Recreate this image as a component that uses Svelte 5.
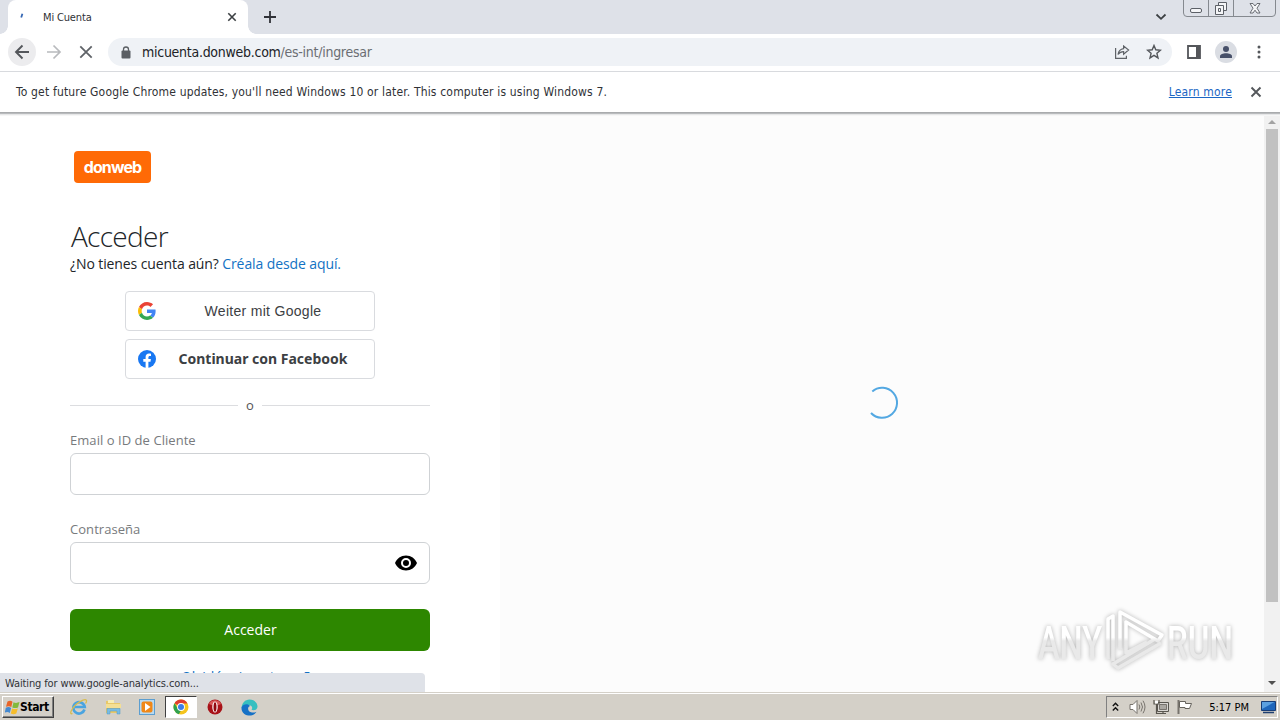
<script>
	let email = '';
	let password = '';
	const tab = 'Mi Cuenta';
	const host = 'micuenta.donweb.com';
	const path = '/es-int/ingresar';
</script>

<div class="desktop">
	<div class="browser">
		<div class="tabstrip">
			<div class="tab">
				<svg class="loading" width="16" height="16" viewBox="0 0 16 16">
					<path d="M5.2 8.500 6.400 4.700" stroke="#3567b4" stroke-width="1.800" />
				</svg>
				<span class="tab-title">{tab}</span>
				<svg class="tab-close" width="10" height="10" viewBox="0 0 10 10">
					<path d="m1.3 1.3 7.4 7.4m0-7.4-7.4 7.4" stroke="#3c4043" stroke-width="1.6" />
				</svg>
			</div>
			<svg class="new-tab" width="12" height="12" viewBox="0 0 12 12">
				<path d="M6 0v12M0 6h12" stroke="#303238" stroke-width="1.8" />
			</svg>
			<svg class="tab-search" width="12" height="8" viewBox="0 0 12 8">
				<path d="m1.5 1.5 4.5 4.3 4.5-4.3" fill="none" stroke="#3c4043" stroke-width="1.8" />
			</svg>
			<svg class="window-buttons" width="94" height="18" viewBox="0 0 94 18">
				<path
					d="M.5 0v13q0 3.500 3.500 3.500h85q3.500 0 3.500-3.500V0M25.500 0v16M50.500 0v16"
					fill="none"
					stroke="#85898f"
				/>
				<g fill="#f4f5f7" stroke="#5c6067">
					<rect x="7.500" y="8.500" width="11" height="4" rx="1.500" />
					<path d="M35.500 2.500h8v8h-8z" />
					<path d="M32.500 5.500h8v9h-8z" />
					<path d="M35.500 8.500h2v3h-2z" />
					<path
						d="M67 3.500h3l2 2.500 2-2.500h3l-3 4.700 3 4.800h-3l-2-2.800-2 2.800h-3l3-4.800z"
						stroke-width=".9"
					/>
				</g>
			</svg>
		</div>

		<div class="toolbar">
			<div class="round back">
				<svg width="16" height="16" viewBox="0 0 16 16">
					<path
						d="M15 8H2m6.500-6.500L2 8l6.500 6.500"
						fill="none"
						stroke="#54575b"
						stroke-width="1.900"
					/>
				</svg>
			</div>
			<svg class="forward" width="16" height="16" viewBox="0 0 16 16">
				<path
					d="M1 8h13M7.500 1.500 14 8l-6.500 6.500"
					fill="none"
					stroke="#b8babd"
					stroke-width="1.700"
				/>
			</svg>
			<svg class="stop" width="14" height="14" viewBox="0 0 14 14">
				<path d="m1.300 1.300 11.400 11.400m0-11.400L1.300 12.700" stroke="#5f6368" stroke-width="1.800" />
			</svg>
			<div class="omnibox">
				<svg width="10" height="13" viewBox="0 0 10 13">
					<rect x=".5" y="4.500" width="9" height="8" rx="1" fill="#5b5f64" />
					<path d="M2.500 5V3.500a2.500 2.500 0 0 1 5 0V5" fill="none" stroke="#5b5f64" stroke-width="1.300" />
				</svg>
				<span class="url">{host}<i>{path}</i></span>
				<svg class="share" width="16" height="14" viewBox="0 0 16 14">
					<g fill="none" stroke="#5f6368" stroke-width="1.200">
						<path d="M1.600 3v10.400h10.800v-2.600" />
						<path d="M9.600 1v2.600C6.400 4 4.600 6 4 9.500c1.500-2 3.300-2.800 5.600-2.800v2.600L14.600 5z" />
					</g>
				</svg>
				<svg class="star" width="16" height="16" viewBox="0 0 16 16">
					<path
						d="m8 1.500 1.800 4.300 4.700.4-3.600 3.100 1.100 4.600-4-2.500-4 2.500 1.100-4.600-3.600-3.100 4.700-.4z"
						fill="none"
						stroke="#54575b"
						stroke-width="1.400"
					/>
				</svg>
			</div>
			<svg class="panel" width="14" height="14" viewBox="0 0 14 14">
				<path d="M1 1h12v12H1z" fill="none" stroke="#54565a" stroke-width="1.800" />
				<path d="M9 1h4v12H9z" fill="#54565a" />
			</svg>
			<div class="round avatar">
				<svg width="14" height="14" viewBox="0 0 14 14" fill="#475069">
					<circle cx="7" cy="4" r="3" />
					<path d="M1 13v-1.800C1 9.200 4 8.200 7 8.200s6 1 6 3V13z" />
				</svg>
			</div>
			<svg class="dots" width="4" height="14" viewBox="0 0 4 14" fill="#54575b">
				<circle cx="2" cy="2" r="1.500" />
				<circle cx="2" cy="7" r="1.500" />
				<circle cx="2" cy="12" r="1.500" />
			</svg>
		</div>

		<div class="infobar">
			<span class="notice">
				To get future Google Chrome updates, you'll need Windows 10 or later. This computer is using
				Windows 7.
			</span>
			<span class="learn">Learn more</span>
			<svg width="12" height="12" viewBox="0 0 12 12">
				<path d="m1.500 1.500 9 9m0-9-9 9" stroke="#54575b" stroke-width="1.900" />
			</svg>
		</div>

		<div class="page">
			<main>
				<div class="logo"><span>donweb</span></div>
				<h1><span>Acceder</span></h1>
				<p class="signup"><span class="ask">¿No tienes cuenta aún?</span> <span class="create">Créala desde aquí.</span></p>

				<button class="social">
					<svg width="18" height="18" viewBox="0 0 48 48">
						<path
							fill="#ea4335"
							d="M24 9.500c3.540 0 6.710 1.220 9.210 3.600l6.850-6.850C35.900 2.380 30.470 0 24 0 14.620 0 6.510 5.380 2.560 13.220l7.980 6.190C12.430 13.720 17.740 9.500 24 9.500z"
						/>
						<path
							fill="#4285f4"
							d="M46.980 24.550c0-1.570-.15-3.090-.38-4.550H24v9.020h12.940c-.58 2.960-2.260 5.480-4.780 7.180l7.730 6c4.510-4.180 7.090-10.360 7.090-17.650z"
						/>
						<path
							fill="#fbbc05"
							d="M10.530 28.590A14.500 14.500 0 0 1 9.770 24c0-1.600.27-3.140.76-4.590l-7.980-6.190A23.900 23.900 0 0 0 0 24c0 3.880.92 7.540 2.560 10.780z"
						/>
						<path
							fill="#34a853"
							d="M24 48c6.480 0 11.930-2.130 15.890-5.810l-7.730-6c-2.150 1.450-4.920 2.300-8.160 2.300-6.260 0-11.570-4.220-13.470-9.910l-7.980 6.190C6.510 42.620 14.620 48 24 48z"
						/>
					</svg>
					<span class="google">Weiter mit Google</span>
				</button>
				<button class="social">
					<svg width="18" height="18" viewBox="0 0 18 18">
						<circle cx="9" cy="9" r="9" fill="#1877f2" />
						<path
							fill="#fff"
							d="M7.600 18v-6.300H5.300V9h2.300V7c0-2.300 1.300-3.500 3.400-3.500.9 0 2 .2 2 .2v2.200h-1.100c-1.100 0-1.500.7-1.500 1.400V9h2.500l-.4 2.700h-2.100V18z"
						/>
					</svg>
					<span class="facebook">Continuar con Facebook</span>
				</button>

				<div class="divider"><span>o</span></div>

				<label>
					<span class="l-email">Email o ID de Cliente</span>
					<input type="text" bind:value={email} />
				</label>
				<label>
					<span class="l-pass">Contraseña</span>
					<div class="password">
						<input type="password" bind:value={password} />
						<svg class="eye" width="22" height="16" viewBox="0 0 22 16">
							<path
								fill-rule="evenodd"
								d="M11 .5C6 .5 1.800 3.600 0 8c1.800 4.400 6 7.500 11 7.500S20.200 12.400 22 8C20.200 3.600 16 .5 11 .5zM11 13a5 5 0 1 1 0-10 5 5 0 0 1 0 10zm0-2a3 3 0 1 0 0-6 3 3 0 0 0 0 6z"
							/>
						</svg>
					</div>
				</label>
				<button class="submit"><span>Acceder</span></button>
				<div class="forgot"><span>Olvidé mi contraseña</span></div>
			</main>

			<div class="aside">
				<svg class="spinner" width="34" height="34" viewBox="0 0 34 34">
					<path
						d="M7.300 5.400A15 15 0 1 1 6 27"
						fill="none"
						stroke="#53a8e2"
						stroke-width="2"
					/>
				</svg>
			</div>

			<div class="scrollbar">
				<svg width="8" height="4" viewBox="0 0 8 4"><path d="m0 4 4-4 4 4z" fill="#a3a3a3" /></svg>
				<div class="thumb"></div>
				<svg width="8" height="4" viewBox="0 0 8 4"><path d="m0 0 4 4 4-4z" fill="#505050" /></svg>
			</div>

			<svg class="watermark" width="220" height="80" viewBox="0 0 220 80">
				<defs>
					<linearGradient id="fade" x1="0" y1="12" x2="0" y2="64" gradientUnits="userSpaceOnUse">
						<stop offset=".45" stop-color="#fff" />
						<stop offset=".52" stop-color="#e9e9e9" />
					</linearGradient>
				</defs>
				<g class="mark">
					<text x="6" y="57" textLength="64" lengthAdjust="spacingAndGlyphs">ANY</text>
					<text x="135" y="57" textLength="66" lengthAdjust="spacingAndGlyphs">RUN</text>
					<g fill="none" stroke="url(#fade)" stroke-width="3.500" stroke-linejoin="round">
						<path d="M76 57V17l5-3v45" />
						<path d="m88 47V10l42 23-4 6-32-19v31l21-11" />
						<path d="m129 41-43 25-5-4 42-25" />
					</g>
				</g>
			</svg>
			<div class="status"><span>Waiting for www.google-analytics.com...</span></div>
		</div>
	</div>

	<div class="taskbar">
		<div class="start">
			<svg width="15" height="15" viewBox="0 0 15 15">
				<path d="M2.500 1.500q3-1.500 5 .3L6.300 7Q4 5.500 1 6.800z" fill="#e86428" />
				<path d="M8.500 2.300q2.500 1.300 6-.2L13 7.500q-3 1.200-5.700-.1z" fill="#83b93d" />
				<path d="M.8 7.700q3-1.300 5.300.2l-1.300 5q-2.300-1.500-5-.3z" fill="#4489d0" />
				<path d="M7.100 8.400q2.500 1.300 5.700.1l-1.500 5q-2.800 1.300-5.500 0z" fill="#f6bd2b" />
			</svg>
			<b>Start</b>
		</div>
		<div class="quick">
			<div class="item">
				<svg width="18" height="18" viewBox="0 0 18 18">
					<path
						d="M14.500 11.500A5.700 5.700 0 1 1 14.700 9H5"
						fill="none"
						stroke="#4aa4e0"
						stroke-width="2.700"
					/>
					<path
						d="M2.500 15.500C-1 17 1 11 6 6.500s10-6 10.500-4c.2 1-.3 2-1 3"
						fill="none"
						stroke="#d8bc50"
						stroke-width="1.300"
					/>
				</svg>
			</div>
			<div class="item">
				<svg width="17" height="16" viewBox="0 0 17 16">
					<path d="M1 2h6l1 2h7v10H1z" fill="#e8c868" />
					<path d="M3 1h6v3H3z" fill="#f7edb5" />
					<path d="M1 5h15v4H1z" fill="#f4df94" />
					<path d="M2 15V9.500h13V15h-3v-3H5v3z" fill="#79bce4" stroke="#4f98c6" stroke-width=".5" />
				</svg>
			</div>
			<div class="item">
				<svg width="16" height="16" viewBox="0 0 16 16">
					<rect x=".5" y=".5" width="15" height="15" fill="#b9daf0" stroke="#5c9ed0" />
					<rect x="2.500" y="2.500" width="11" height="11" rx="2" fill="#f08818" />
					<path d="m6 4 5.500 4L6 12z" fill="#fff" />
				</svg>
			</div>
			<div class="item active">
				<svg width="16" height="16" viewBox="0 0 16 16">
					<circle cx="8" cy="8" r="7.500" fill="#f5c41c" />
					<path d="M8 8 1.500 4.200A7.500 7.500 0 0 1 14.500 4.500H8z" fill="#df3d31" />
					<path d="M1.500 4.200 5 10l3 1.500-2.200 3.700A7.500 7.500 0 0 1 1.500 4.200z" fill="#30a14e" />
					<circle cx="8" cy="8" r="3.900" fill="#fff" />
					<circle cx="8" cy="8" r="3" fill="#3c7ee8" />
				</svg>
			</div>
			<div class="item">
				<svg width="16" height="16" viewBox="0 0 16 16">
					<circle cx="8" cy="8" r="7.500" fill="#a81218" />
					<path d="M2 5a6.700 6.700 0 0 1 12 0Q8 8 2 5z" fill="#d85858" />
					<ellipse cx="8" cy="8" rx="2.700" ry="5.500" fill="#fff" />
					<ellipse cx="8" cy="8" rx="1.500" ry="4.800" fill="#92080e" />
				</svg>
			</div>
			<div class="item">
				<svg width="17" height="17" viewBox="0 0 17 17">
					<path d="M.5 9C1 4 4 .5 8.500.5c5 0 8 3.500 8 7 0 4-5 4.500-6 3 1.500-1.500.5-4-2.500-4.500S2 6.500.5 9z" fill="#37bfc0" />
					<path
						d="M.5 8.500C1.500 5 7 4 9 7c-3 1-2.500 6 2 6.500 2 .3 3.500-.2 4.500-.8-2 3-5 4-8 3.800C3 16.200.3 12.500.5 8.500z"
						fill="#1671c6"
					/>
				</svg>
			</div>
		</div>
		<div class="tray">
			<svg width="7" height="10" viewBox="0 0 7 10">
				<path d="M.8 4 3.500 1.300 6.200 4M.8 8.500l2.700-2.700 2.700 2.700" fill="none" stroke="#111" stroke-width="1.400" />
			</svg>
			<svg class="volume" width="17" height="16" viewBox="0 0 17 16">
				<path d="M1 5.500h3l4-4v13l-4-4H1z" fill="#fff" stroke="#77736d" />
				<path
					d="M10 5.500q1.700 2.500 0 5M12 3.500q3 4.500 0 9M14 1.700q4 6.300 0 12.600"
					fill="none"
					stroke="#77736d"
				/>
			</svg>
			<svg class="network" width="17" height="16" viewBox="0 0 17 16">
				<path d="M4.500 3.500h11v9h-11z" fill="#d8d6d2" stroke="#59564f" />
				<path d="M6.500 5.500h7v5h-7z" fill="#aaa7a1" stroke="#77736d" />
				<path d="M1 1v4h5V1M3.500 5v9.500H13M10 12v2.500" fill="none" stroke="#59564f" stroke-width="1.200" />
				<path d="M2 2h3v2.500H2z" fill="#fff" />
			</svg>
			<svg class="flag" width="16" height="16" viewBox="0 0 16 16">
				<path d="M1.500 1v14" stroke="#77736d" stroke-width="2" />
				<path d="M2.500 2.500h6v2h6l-2 5H8v-1H2.500z" fill="#fff" stroke="#66635d" />
			</svg>
			<span class="clock">5:17 PM</span>
			<svg class="show-desktop" width="15" height="13" viewBox="0 0 15 13">
				<path d="M.5.500h14v9H.5z" fill="#1e66bb" stroke="#173d77" />
				<path d="M1 1h12.500L1 8z" fill="#5ba0e0" />
				<path d="M2 11.500h11" stroke="#1e3f70" stroke-width="1.500" />
			</svg>
		</div>
	</div>
</div>

<style>
	:global(body) {
		margin: 0;
		overflow: hidden;
	}
	.desktop {
		width: 1280px;
		height: 720px;
		display: flex;
		flex-direction: column;
		overflow: hidden;
		background: #fff;
		font: 12px 'DejaVu Sans Condensed', 'DejaVu Sans', sans-serif;
		font-stretch: condensed;
		color: #303236;
	}
	svg {
		display: block;
		flex: none;
	}
	span {
		white-space: nowrap;
	}
	.browser {
		height: 692px;
		display: flex;
		flex-direction: column;
	}

	.tabstrip {
		height: 34px;
		display: flex;
		align-items: center;
		background: #dee1e8;
		flex: none;
	}
	.tab {
		box-sizing: border-box;
		display: flex;
		align-items: center;
		width: 240px;
		height: 34px;
		margin-left: 8px;
		padding: 0 11px 0 8px;
		background: #fff;
		border-radius: 8px 8px 0 0;
		position: relative;
	}
	.tab::before,
	.tab::after {
		content: '';
		position: absolute;
		bottom: 0;
		width: 8px;
		height: 8px;
	}
	.tab::before {
		left: -8px;
		background: radial-gradient(circle at 0 0, transparent 7.500px, #fff 8px);
	}
	.tab::after {
		right: -8px;
		background: radial-gradient(circle at 100% 0, transparent 7.500px, #fff 8px);
	}
	.tab-title {
		flex: 1;
		margin-left: 11px;
		font-size: 11px;
		letter-spacing: -0.15px;
	}
	.new-tab {
		margin-left: 16px;
	}
	.tab-search {
		margin-left: auto;
	}
	.window-buttons {
		align-self: flex-start;
		margin: 0 3px 0 16px;
	}

	.toolbar {
		box-sizing: border-box;
		height: 38px;
		flex: none;
		display: flex;
		align-items: center;
		padding: 0 19px 1px 8px;
		border-bottom: 1px solid #d8dade;
	}
	.round {
		display: flex;
		align-items: center;
		justify-content: center;
		border-radius: 50%;
	}
	.back {
		width: 28px;
		height: 28px;
		background: #ececee;
	}
	.forward {
		margin-left: 10px;
	}
	.stop {
		margin-left: 17px;
	}
	.omnibox {
		box-sizing: border-box;
		display: flex;
		align-items: center;
		width: 1064px;
		height: 28px;
		margin-left: 15px;
		padding: 0 10px 0 13px;
		border-radius: 14px;
		background: #eff2f6;
	}
	.url {
		flex: 1;
		margin-left: 11px;
		font-size: 14px;
		letter-spacing: -0.27px;
		color: #202226;
	}
	.url i {
		font-style: normal;
		color: #6b6e73;
	}
	.star {
		margin-left: 16px;
	}
	.panel {
		margin-left: 15px;
	}
	.avatar {
		width: 22px;
		height: 22px;
		margin-left: 14px;
		background: #dadde3;
	}
	.dots {
		margin-left: auto;
	}

	.infobar {
		box-sizing: border-box;
		height: 40px;
		flex: none;
		display: flex;
		align-items: center;
		padding: 0 18px 0 16px;
		font-size: 12px;
		letter-spacing: 0.17px;
	}
	.notice {
		flex: 1;
	}
	.learn {
		margin-right: 18px;
		color: #1b66c4;
		text-decoration: underline;
	}

	.page {
		height: 580px;
		flex: none;
		display: flex;
		position: relative;
		overflow: hidden;
	}
	/* shadow that the infobar casts on the page */
	.page::before {
		content: '';
		position: absolute;
		top: 0;
		left: 0;
		right: 0;
		height: 4px;
		z-index: 1;
		background: linear-gradient(#a9abad 0 1px, #b9bbbd 1px 2px, #e6e7e8 2px 3px, #f6f6f6 3px);
	}
	main {
		box-sizing: border-box;
		width: 500px;
		padding: 39px 70px 0;
	}
	.logo {
		width: 77px;
		height: 32px;
		margin-left: 4px;
		display: flex;
		align-items: center;
		justify-content: center;
		background: #ff6a06;
		border-radius: 4px;
		color: #fff;
		font: bold 16px Inter, sans-serif;
		letter-spacing: -0.9px;
	}
	h1 {
		margin: 36px 0 0 1px;
		color: #212529;
		font: 300 28px/34px 'Open Sans', sans-serif;
		letter-spacing: -0.7px;
	}
	.signup {
		margin: 1px 0 17px;
		font: 14px/20px 'Open Sans', sans-serif;
		letter-spacing: -0.1px;
		color: #212529;
	}
	.create {
		color: #1272c4;
	}
	.social {
		box-sizing: border-box;
		display: flex;
		align-items: center;
		width: 250px;
		height: 40px;
		margin: 0 auto 8px;
		padding: 0 4px 0 12px;
		border: 1px solid #d9dbdf;
		border-radius: 4px;
		background: #fff;
		color: #3c4043;
	}
	.social span {
		flex: 1;
		text-align: center;
		margin-top: -1px;
	}
	.google {
		font: 14px 'Liberation Sans', sans-serif;
		letter-spacing: 0.3px;
	}
	.facebook {
		font: bold 14px 'Noto Sans', sans-serif;
	}
	.divider {
		display: flex;
		align-items: center;
		height: 20px;
		margin-top: 16px;
		gap: 8px;
		font: 13px 'Open Sans', sans-serif;
		color: #555;
	}
	.divider::before,
	.divider::after {
		content: '';
		flex: 1;
		height: 1px;
		background: #dcdde0;
	}
	label {
		display: block;
		height: 89px;
		font: 13px/20px 'Open Sans', sans-serif;
		letter-spacing: 0.05px;
		color: #777a7d;
	}
	label:first-of-type {
		margin-top: 15px;
	}
	label > span {
		display: block;
	}
	input {
		box-sizing: border-box;
		display: block;
		width: 360px;
		height: 42px;
		margin-top: 3px;
		border: 1px solid #cfd2d5;
		border-radius: 6px;
		background: #fff;
	}
	.password {
		position: relative;
	}
	.eye {
		position: absolute;
		right: 13px;
		top: 13px;
	}
	.submit {
		display: block;
		width: 360px;
		height: 42px;
		margin: 1px 0 0;
		padding: 0 0 1px 1px;
		border: 0;
		border-radius: 6px;
		background: #2d8700;
		color: #fff;
		font: 14px 'Open Sans', sans-serif;
	}
	.forgot {
		margin-top: 16px;
		text-align: center;
		color: #1272c4;
		font: 14px/20px 'Open Sans', sans-serif;
	}
	.aside {
		box-sizing: border-box;
		flex: 1;
		display: flex;
		align-items: center;
		justify-content: center;
		padding-top: 2px;
		background: #fcfcfc;
	}
	.scrollbar {
		box-sizing: border-box;
		width: 16px;
		display: flex;
		flex-direction: column;
		align-items: center;
		padding: 8px 0 7px;
		background: #f1f1f1;
	}
	.thumb {
		width: 12px;
		height: 473px;
		margin: 5px 0 auto;
		background: #c1c1c1;
	}
	.watermark {
		position: absolute;
		left: 1032px;
		top: 490px;
		overflow: visible;
	}
	.mark {
		filter: drop-shadow(0 0 2px #b4b4b4);
		fill: url(#fade);
		font: 500 47px 'Roboto', sans-serif;
	}
	.status {
		position: absolute;
		left: 0;
		bottom: 0;
		box-sizing: border-box;
		width: 425px;
		height: 19px;
		padding-left: 5px;
		background: #dfe2e8;
		border-radius: 0 4px 0 0;
		font-size: 11px;
		line-height: 21px;
		letter-spacing: -0.12px;
	}

	.taskbar {
		box-sizing: border-box;
		height: 28px;
		display: flex;
		align-items: center;
		padding: 1px 0 0 2px;
		border-top: 1px solid #d4d0c8;
		background: #d4d0c8;
		box-shadow: inset 0 1px #fff;
		color: #000;
	}
	.start {
		box-sizing: border-box;
		display: flex;
		align-items: center;
		width: 52px;
		height: 22px;
		padding-left: 2px;
		border: 1px solid;
		border-color: #fff #404040 #404040 #fff;
		box-shadow: inset -1px -1px #808080;
		font-size: 12px;
		letter-spacing: -0.4px;
	}
	.quick {
		display: flex;
		margin-left: 8px;
	}
	.item {
		width: 34px;
		height: 22px;
		display: flex;
		align-items: center;
		justify-content: center;
	}
	.active {
		box-sizing: border-box;
		width: 32px;
		margin: 0 1px;
		background: #fff;
		border: 1px solid;
		border-color: #404040 #fff #fff #404040;
	}
	.tray {
		box-sizing: border-box;
		width: 172px;
		height: 22px;
		margin: 0 2px 0 auto;
		display: flex;
		align-items: center;
		padding: 0 1px 0 5px;
		border: 1px solid;
		border-color: #808080 #fff #fff #808080;
	}
	.volume {
		margin-left: 10px;
	}
	.network {
		margin-left: 7px;
	}
	.flag {
		margin-left: 7px;
	}
	.clock {
		margin-left: auto;
		font-size: 11px;
	}
	.show-desktop {
		margin-left: 12px;
	}
</style>
